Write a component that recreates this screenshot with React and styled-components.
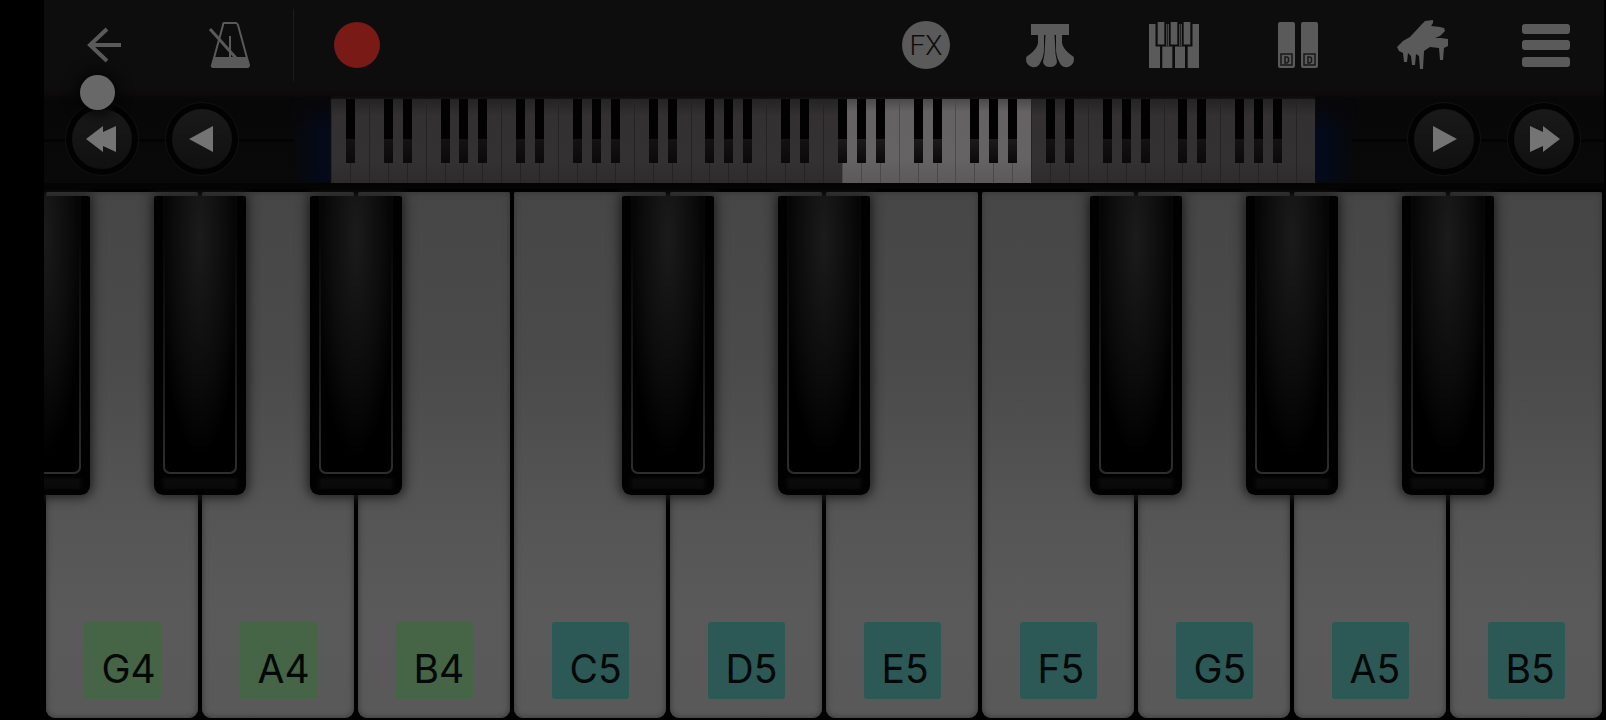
import React from 'react';
import styled, { createGlobalStyle } from 'styled-components';

const GlobalStyle = createGlobalStyle`
  * {
    box-sizing: border-box;
  }

  body {
    margin: 0;
    background: #000;
    font-family: Inter, 'Liberation Sans', sans-serif;
  }

  button {
    padding: 0;
    border: 0;
    background: none;
    font-family: inherit;
    cursor: pointer;
  }
`;

const Screen = styled.div`
  display: flex;
  flex-direction: column;
  min-height: 100vh;
  padding: 0 2px 0 44px;
`;

const Toolbar = styled.header`
  display: flex;
  align-items: center;
  justify-content: space-between;
  height: 90px;
  padding: 0 26px 0 28px;
  background: #0d0d0d;
`;

const ToolGroup = styled.div`
  display: flex;
  align-items: center;
  gap: ${props => props.$gap};
`;

const ToolButton = styled.button`
  position: relative;
  display: flex;
  align-items: center;
  justify-content: center;
  width: 64px;
  height: 64px;
  color: #5a5a5a;
`;

const Divider = styled.span`
  width: 1px;
  height: 72px;
  background: #1c1c1c;
`;

const RecordDot = styled.span`
  width: 46px;
  height: 46px;
  border-radius: 50%;
  background: #791a17;
`;

const FxBadge = styled.span`
  display: flex;
  align-items: center;
  justify-content: center;
  width: 48px;
  height: 48px;
  border-radius: 50%;
  background: #5a5a5a;
  color: #0d0d0d;
  font-family: 'Liberation Sans Narrow', Roboto, sans-serif;
  font-size: 28px;
  font-weight: 300;
`;

const TouchDot = styled.span`
  position: absolute;
  top: 62px;
  left: 8px;
  z-index: 2;
  width: 35px;
  height: 35px;
  border-radius: 50%;
  background: #686868;
  box-shadow: 0 0 14px 4px #050505;
`;

const Navigator = styled.nav`
  display: flex;
  align-items: center;
  height: 99px;
  padding: 4px 24px 0 22px;
  background: linear-gradient(#0e0c0d, #080708 10%, #090909);
  border-bottom: 6px solid #040404;
`;

const Rail = styled.div`
  position: relative;
  display: flex;
  align-items: center;
  gap: 28px;

  &::before {
    content: '';
    position: absolute;
    top: 50%;
    ${props => (props.$side === 'left' ? 'left: -22px; right: -56px;' : 'left: -56px; right: -24px;')}
    height: 3px;
    background: #030303;
  }
`;

const ScrollButton = styled.button`
  position: relative;
  display: flex;
  align-items: center;
  justify-content: center;
  width: 72px;
  height: 72px;
  border: 6px solid #020202;
  border-radius: 50%;
  outline: 1px solid #111;
  background: linear-gradient(#191919, #101010);
  color: #747474;
`;

const Glow = styled.div`
  flex: 0 0 93px;
  height: 84px;
  background: linear-gradient(${props => props.$to}, transparent 55%, #040a19 88%);
  mask-image: linear-gradient(transparent, #000 40%);
`;

const MiniKeyboard = styled.div`
  position: relative;
  display: flex;
  flex: 1;
  height: 84px;
  margin-top: 4px;
  box-shadow: 0 -2px 3px #161414;
`;

const MiniKey = styled.div`
  position: relative;
  flex: 1;
  border-left: 1px solid ${props => (props.$active ? '#4b494a' : '#252425')};
  background: ${props =>
    props.$active
      ? 'linear-gradient(#4b494a, #646263 15%, #656364 70%, #5b595a)'
      : 'linear-gradient(#252425, #323031 20%, #333132 75%, #2d2b2c)'};
`;

const MiniSharp = styled.span`
  position: absolute;
  top: 0;
  left: -5px;
  z-index: 1;
  width: 9px;
  height: 64px;
  background: linear-gradient(#020202 62%, ${props => (props.$active ? '#1c1a1b' : '#141213')} 63%, #0b090a);
`;

const Keyboard = styled.main`
  display: flex;
  flex: 1;
  padding: 3px 0 2px;
  overflow: hidden;
`;

const KeySlot = styled.div`
  position: relative;
  display: flex;
  flex: 1;
  min-width: 0;
`;

const WhiteKey = styled.button`
  display: flex;
  flex: 1;
  align-items: flex-end;
  justify-content: center;
  margin: 0 2px;
  padding-bottom: 19px;
  border-radius: 2px 2px 9px 9px;
  background: linear-gradient(#474647, #4c4b4c 35%, #555455 58%, #5b5a5b 80%, #5a595a);
  box-shadow: inset 0 0 6px #333;
`;

const BlackKey = styled.button`
  position: absolute;
  top: 4px;
  left: -46px;
  z-index: 1;
  display: flex;
  width: 92px;
  height: 299px;
  padding: 0 9px 21px;
  border-radius: 2px 2px 9px 9px;
  background:
    linear-gradient(90deg, #010101 6px, transparent 12px 80px, #010101 86px),
    linear-gradient(#010101 280px, #0b0b0b 284px, #090909 292px, #010101 294px);
  box-shadow: 0 0 12px 2px #1b1b1b;
`;

const BlackKeyFace = styled.span`
  flex: 1;
  border: 2px solid transparent;
  border-top: 0;
  border-radius: 0 0 7px 7px;
  background:
    radial-gradient(ellipse 60% 80% at 50% 15%, #1b1b1b, #0b0b0b 65%, #000) padding-box,
    linear-gradient(#070707 15%, #1a1a1a 65%, #2e2e2e) border-box;
`;

const NoteLabel = styled.span`
  width: 77px;
  height: 77px;
  padding-left: 18px;
  border-radius: 3px;
  background: ${props => (props.$octave === 4 ? '#466446' : '#2c5855')};
  color: #020807;
  font-size: 39px;
  font-weight: 400;
  line-height: 93px;
  text-align: left;
`;

const keys = [
  { note: 'G', octave: 4, sharp: true },
  { note: 'A', octave: 4, sharp: true },
  { note: 'B', octave: 4, sharp: true },
  { note: 'C', octave: 5, sharp: false },
  { note: 'D', octave: 5, sharp: true },
  { note: 'E', octave: 5, sharp: true },
  { note: 'F', octave: 5, sharp: false },
  { note: 'G', octave: 5, sharp: true },
  { note: 'A', octave: 5, sharp: true },
  { note: 'B', octave: 5, sharp: true },
];

// 52 white keys of a full piano, starting on A0
const miniKeys = Array.from({ length: 52 }, (_, i) => ({
  sharp: i > 0 && !'CF'.includes('ABCDEFG'[i % 7]),
  active: i >= 27 && i < 37,
}));

const BackIcon = () => (
  <svg width="36" height="36" viewBox="0 0 36 36" fill="none" stroke="currentColor" strokeWidth="4">
    <path d="M35 18H3M21 2L4 18l17 16" />
  </svg>
);

const MetronomeIcon = () => (
  <svg width="44" height="48" viewBox="0 0 44 48" fill="none" stroke="currentColor">
    <path d="M16 2h12q1 0 2 2l9 33 2 7q0 2-2 2H6q-3 0-2-2l2-7 9-33q0-2 1-2z" strokeWidth="2" />
    <path d="M6 36h33l2 8q0 3-2 3H6q-3 0-2-3z" fill="currentColor" stroke="none" />
    <path d="M2 8l26 29" strokeWidth="3" />
    <path d="M22 15v22" strokeWidth="2" />
  </svg>
);

const PedalsIcon = () => (
  <svg width="50" height="48" viewBox="0 0 50 48" fill="currentColor">
    <path d="M6 3h38v11H6z" />
    <path d="M13 13h6v14c0 8-2 12-5 17q-3 3-7 2-6-2-6-8 0-3 3-4 8-6 9-12z" />
    <path d="M20.500 13h9l1 20 1.500 8q-1 5-7 5t-7-5l1.500-8z" />
    <path d="M37 13h-6v14c0 8 2 12 5 17q3 3 7 2 6-2 6-8 0-3-3-4-8-6-9-12z" />
  </svg>
);

const KeysIcon = () => (
  <svg width="50" height="48" viewBox="0 0 50 48" fill="currentColor">
    <path d="M0 3h6.500v22.500H11V47H0zM13.300 25.500h10V47h-10zM26 25.500h10V47H26zM38.700 25.500h4.800V3H50v44H38.700z" />
    <path d="M8.700 1h6.600v22.500H8.700zM21.700 1h6.600v22.500h-6.600zM34.700 1h6.600v22.500h-6.600z" />
    <path d="M17.300 3h.9v22h-.9zM18.900 3h.9v22h-.9zM30.300 3h.9v22h-.9zM31.900 3h.9v22h-.9z" />
  </svg>
);

const DualIcon = () => (
  <svg width="42" height="48" viewBox="0 0 42 48">
    <path d="M3 1h13q2 0 2 2v42q0 2-2 2H3q-2 0-2-2V3q0-2 2-2zM26 1h13q2 0 2 2v42q0 2-2 2H26q-2 0-2-2V3q0-2 2-2z" fill="currentColor" />
    <g fill="none" stroke="#191919" strokeWidth="1.500">
      <path d="M4 33h11v11H4zM27 33h11v11H27zM8 36h2l1.500 1v3.500L10 42H8zM31 36h2l1.500 1v3.500L33 42h-2z" />
    </g>
  </svg>
);

const PianoIcon = () => (
  <svg width="52" height="52" viewBox="0 0 52 52" fill="currentColor">
    <path d="M1 28l6-6 7-4 12-13 3-3 8-1v3l-2 3 9 1 4 1 1 3-5 5-5 2 6 0 7 1v7l-4 2-1 12h-3l-1-12-9-1-6 4-1 18h-3l-1-13-3-2-1 11h-3l-1-9-3-3-1 9h-3l-1-9-4-2z" />
  </svg>
);

const MenuIcon = () => (
  <svg width="48" height="44" viewBox="0 0 48 44" fill="currentColor">
    <rect y="1" width="48" height="10" rx="3" />
    <rect y="17" width="48" height="10" rx="3" />
    <rect y="34" width="48" height="10" rx="3" />
  </svg>
);

const ArrowIcon = ({ double, flip }) => (
  <svg
    width="32"
    height="28"
    viewBox="0 0 32 28"
    fill="currentColor"
    transform={flip ? 'scale(-1 1)' : undefined}
  >
    {double ? <path d="M0 14L17 1v6l13-6v26l-13-6v6z" /> : <path d="M3 14L27 1v26z" />}
  </svg>
);

const App = () => {
  return (
    <>
      <GlobalStyle />
      <Screen>
        <Toolbar>
          <ToolGroup $gap="31px">
            <ToolGroup $gap="62px">
              <ToolButton aria-label="Back">
                <BackIcon />
                <TouchDot />
              </ToolButton>
              <ToolButton aria-label="Metronome"><MetronomeIcon /></ToolButton>
            </ToolGroup>
            <Divider />
            <ToolButton aria-label="Record"><RecordDot /></ToolButton>
          </ToolGroup>
          <ToolGroup $gap="60px">
            <ToolButton><FxBadge>FX</FxBadge></ToolButton>
            <ToolButton aria-label="Pedals"><PedalsIcon /></ToolButton>
            <ToolButton aria-label="Keyboard"><KeysIcon /></ToolButton>
            <ToolButton aria-label="Dual mode"><DualIcon /></ToolButton>
            <ToolButton aria-label="Instrument"><PianoIcon /></ToolButton>
            <ToolButton aria-label="Menu"><MenuIcon /></ToolButton>
          </ToolGroup>
        </Toolbar>

        <Navigator>
          <Rail $side="left">
            <ScrollButton aria-label="Previous octave"><ArrowIcon double /></ScrollButton>
            <ScrollButton aria-label="Previous key"><ArrowIcon /></ScrollButton>
          </Rail>
          <Glow $to="to right" />
          <MiniKeyboard>
            {miniKeys.map((key, i) => (
              <MiniKey key={i} $active={key.active}>
                {key.sharp && <MiniSharp $active={key.active} />}
              </MiniKey>
            ))}
          </MiniKeyboard>
          <Glow $to="to left" />
          <Rail $side="right">
            <ScrollButton aria-label="Next key"><ArrowIcon flip /></ScrollButton>
            <ScrollButton aria-label="Next octave"><ArrowIcon double flip /></ScrollButton>
          </Rail>
        </Navigator>

        <Keyboard>
          {keys.map(({ note, octave, sharp }) => (
            <KeySlot key={note + octave}>
              {sharp && (
                <BlackKey aria-label={`${note} flat`}>
                  <BlackKeyFace />
                </BlackKey>
              )}
              <WhiteKey>
                <NoteLabel $octave={octave}>{note}{octave}</NoteLabel>
              </WhiteKey>
            </KeySlot>
          ))}
        </Keyboard>
      </Screen>
    </>
  );
};

export default App;
